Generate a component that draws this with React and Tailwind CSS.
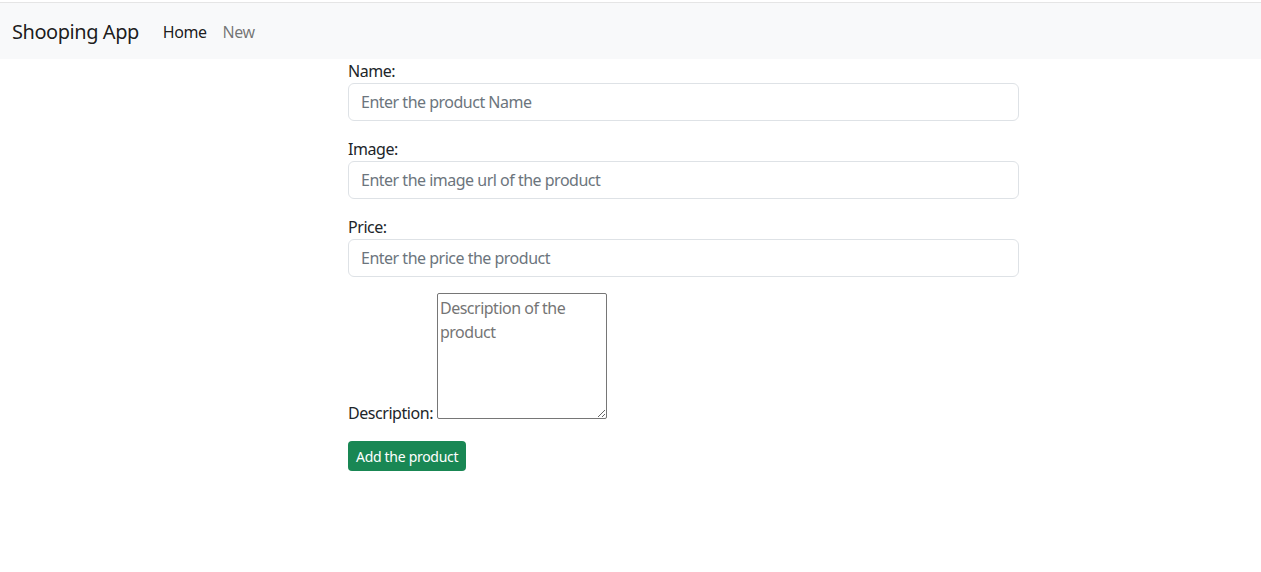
export default function App() {
  return (
    <div className="min-h-[572px] bg-white text-[#212529] font-['Noto_Sans',sans-serif] tracking-[-0.45px]">
      <div className="h-[2px] bg-white" />
      <nav className="h-[57px] border-t border-[#e5e5e5] bg-[#f8f9fa] flex items-center pl-3 pt-[2px]">
        <span className="text-[20px] leading-[30px] text-[#000000e6] mr-4">Shooping App</span>
        <a className="text-[16px] leading-6 text-[#000000e6] px-2">Home</a>
        <a className="text-[16px] leading-6 text-[#0000008c] px-2">New</a>
      </nav>
      <form className="ml-[348px] w-[671px] text-[16px] leading-6">
        <div className="mb-4">
          <label className="block">Name:</label>
          <input
            className="block w-full h-[38px] border border-[#dee2e6] rounded-[6px] px-3 tracking-[-0.5px] placeholder:text-[#6c757d] outline-none"
            placeholder="Enter the product Name"
          />
        </div>
        <div className="mb-4">
          <label className="block">Image:</label>
          <input
            className="block w-full h-[38px] border border-[#dee2e6] rounded-[6px] px-3 tracking-[-0.5px] placeholder:text-[#6c757d] outline-none"
            placeholder="Enter the image url of the product"
          />
        </div>
        <div className="mb-4">
          <label className="block">Price:</label>
          <input
            className="block w-full h-[38px] border border-[#dee2e6] rounded-[6px] px-3 tracking-[-0.5px] placeholder:text-[#6c757d] outline-none"
            placeholder="Enter the price the product"
          />
        </div>
        <div className="flex items-end gap-[4px]">
          <label className="leading-6 mb-[-6px]">Description:</label>
          <textarea
            className="w-[170px] h-[126px] border border-[#767676] rounded-[2px] p-[2px] tracking-[-0.5px] placeholder:text-[#757575] outline-none"
            placeholder="Description of the product"
          />
        </div>
        <button
          type="button"
          className="mt-[22px] h-[30px] px-2 bg-[#198754] text-white text-[14px] leading-[21px] rounded-[4px] font-normal tracking-[-0.3px]"
        >
          Add the product
        </button>
      </form>
    </div>
  );
}
